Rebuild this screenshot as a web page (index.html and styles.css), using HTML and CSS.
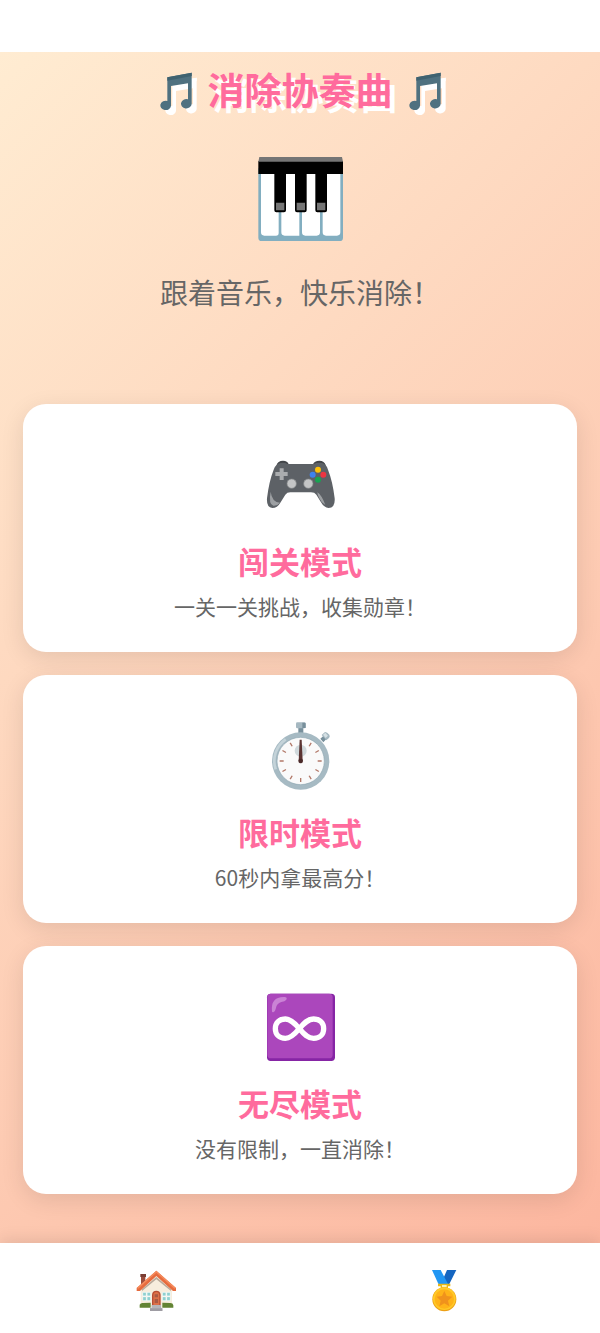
FILE: index.html
```html
<!DOCTYPE html>
<html lang="zh-CN">
<head>
<meta charset="utf-8">
<meta name="viewport" content="width=device-width, initial-scale=1">
<title>消除协奏曲</title>
<link rel="stylesheet" href="styles.css">
</head>
<body>
<div class="status-bar"></div>
<main class="home">
  <header class="hero">
    <div class="hero-title">
      <svg class="note" viewBox="0 0 120 126" aria-hidden="true"><path fill="#4f7180" d="M34 28 107 14V108A16 14 0 1 1 96 94V46L45 54V114A16 14 0 1 1 34 99Z"/><path fill="#3f6270" d="M34 28 107 14V24L34 38Z"/></svg>
      <h1>消除协奏曲</h1>
      <svg class="note" viewBox="0 0 120 126" aria-hidden="true"><path fill="#4f7180" d="M34 28 107 14V108A16 14 0 1 1 96 94V46L45 54V114A16 14 0 1 1 34 99Z"/><path fill="#3f6270" d="M34 28 107 14V24L34 38Z"/></svg>
    </div>
    <svg class="piano" viewBox="36 33 258 258" aria-hidden="true">
      <path fill="#82aec0" d="M40 70H294V278Q294 288 284 288H50Q40 288 40 278Z"/>
      <path fill="#fff" d="M48 80H101V264Q101 272 93 272H58Q48 272 48 262ZM109 80H163V272H119Q109 272 109 262ZM171 80H225V262Q225 272 215 272H181Q171 272 171 262ZM233 80H286V262Q286 272 276 272H243Q233 272 233 262Z"/>
      <path fill="#000" d="M40 48H294V87H246V196Q246 202 240 202H217Q211 202 211 196V87H185V196Q185 202 179 202H156Q150 202 150 196V87H123V196Q123 202 117 202H94Q88 202 88 196V87H40Z"/>
      <path fill="#757575" d="M43 36H291L294 50H40Z"/>
      <path fill="#757575" d="M93 173H118V196H93ZM155 173H180V196H155ZM216 173H241V196H216Z"/>
    </svg>
    <p class="tagline">跟着音乐，快乐消除！</p>
  </header>

  <div class="modes">
    <button class="mode" type="button">
      <svg class="mode-icon" viewBox="30 15 210 210" aria-hidden="true">
        <path fill="#424549" d="M64 62Q68 47 84 47Q98 47 101 58L96 68ZM174 58Q178 47 193 47Q208 47 213 62L180 68Z"/>
        <path fill="#5d6166" d="M76 54Q88 51 98 57H176Q188 51 201 54Q214 57 219 74Q233 109 239 160Q241 188 221 189Q207 188 198 172L184 149Q179 142 168 142H106Q96 142 91 149L76 173Q67 189 52 189Q34 188 36 160Q42 109 56 74Q62 57 76 54Z"/>
        <path fill="#9da0a3" d="M47 140Q51 172 75 173Q67 183 55 182Q40 178 47 140ZM187 142Q200 150 211 180Q199 174 193 160Q187 150 187 142Z"/>
        <path fill="#aaacae" d="M74 70H86V81H98V93H86V105H74V93H61V81H74Z"/>
        <g fill="#c4c5c6" stroke="#85888a" stroke-width="2"><circle cx="110" cy="116" r="14"/><circle cx="160" cy="116" r="14"/></g>
        <circle cx="189" cy="74" r="9" fill="#ffc107"/><circle cx="173" cy="89" r="9" fill="#3d82ef"/><circle cx="205" cy="89" r="9" fill="#ed3541"/><circle cx="189" cy="104" r="9" fill="#18a452"/>
      </svg>
      <span class="mode-name">闯关模式</span>
      <span class="mode-text">一关一关挑战，收集勋章！</span>
    </button>

    <button class="mode" type="button">
      <svg class="mode-icon" viewBox="30 33 210 210" aria-hidden="true">
        <path fill="#78909c" d="M130 53H145V72H130ZM196 86 208 75 217 84 205 97Z"/>
        <rect x="123" y="37" width="29" height="18" rx="4" fill="#a5b8c1"/><path fill="#78909c" d="M142 38H149Q152 38 152 42V54H142Z"/>
        <path fill="#a5b8c1" d="M200 75 210 66Q215 65 223 74Q226 79 222 84L214 91Z"/><path fill="#d5e0e4" d="M204 74 211 68 219 77 212 84Z"/>
        <circle cx="137" cy="153" r="86" fill="#a6bac3"/>
        <path fill="none" stroke="#c4d3d9" stroke-width="8" d="M62 178A79 79 0 0 1 92 88"/>
        <circle cx="137" cy="153" r="71" fill="#fafafa" stroke="#8fa7b2" stroke-width="2"/>
        <circle cx="137" cy="122" r="18" fill="#d0d9dc"/>
        <g stroke="#b27868" stroke-width="4">
          <path d="M137 204V216M188 153H200M74 153H86"/>
          <path d="M137 204V216" transform="rotate(30 137 153)"/><path d="M137 204V216" transform="rotate(60 137 153)"/><path d="M137 204V216" transform="rotate(120 137 153)"/><path d="M137 204V216" transform="rotate(150 137 153)"/><path d="M137 204V216" transform="rotate(210 137 153)"/><path d="M137 204V216" transform="rotate(240 137 153)"/><path d="M137 204V216" transform="rotate(300 137 153)"/><path d="M137 204V216" transform="rotate(330 137 153)"/>
        </g>
        <path fill="#5b3432" d="M134 89H140L143 153H131Z"/><circle cx="137" cy="153" r="7" fill="#4a2928"/>
      </svg>
      <span class="mode-name">限时模式</span>
      <span class="mode-text">60秒内拿最高分！</span>
    </button>

    <button class="mode" type="button">
      <svg class="mode-icon" viewBox="30 37 210 210" aria-hidden="true">
        <rect x="36" y="42" width="204" height="202" rx="11" fill="#8625a5"/>
        <rect x="37" y="42" width="196" height="194" rx="11" fill="#ab47bc"/>
        <path fill="#ca83d5" d="M51 96Q46 51 88 52Q98 52 94 60Q90 66 79 67Q64 71 62 88Q59 102 51 96Z"/>
        <path fill="none" stroke="#fff" stroke-width="16" stroke-linejoin="round" d="M133 147C119 130 107 118 91 118C73 118 61 130 61 147S73 176 91 176C107 176 119 164 133 147S159 118 176 118C194 118 206 130 206 147S194 176 176 176C159 176 147 164 133 147Z"/>
      </svg>
      <span class="mode-name">无尽模式</span>
      <span class="mode-text">没有限制，一直消除！</span>
    </button>
  </div>
</main>

<nav class="tabs">
  <a class="tab" href="#home" aria-label="首页">
    <svg class="tab-icon" viewBox="45 45 126 126" aria-hidden="true">
      <path fill="#9c4d3d" d="M63 63H76V92H63Z"/><path fill="#7b3e34" d="M61 57H78V66H61Z"/>
      <path fill="#f7eddd" d="M62 102 109 60 156 102V157H62Z"/>
      <path fill="#b9a99a" d="M66 103 109 66 153 103V108L109 73 66 108Z"/>
      <path fill="#e66b3e" d="M109 47 168 99V108H159L109 63 60 108H50V99Z"/>
      <path fill="#f58b5c" d="M109 47 168 99 163 101 109 53 55 101 50 99Z"/>
      <g fill="#8fd0cf" stroke="#fff" stroke-width="2"><path d="M68 112H79V123H68ZM81 112H92V123H81ZM68 125H79V137H68ZM81 125H92V137H81ZM127 112H138V123H127ZM140 112H151V123H140ZM127 125H138V137H127ZM140 125H151V137H140Z"/></g>
      <path fill="#b84d34" d="M96 150V119Q97 107 109 107T122 119V150Z"/><path fill="#dc7048" d="M100 150V120Q101 111 109 111T118 120V150Z"/><path fill="#a85a44" d="M104 118H114V127H104ZM104 132H114V144H104Z"/>
      <path fill="#638434" d="M59 158V149Q62 143 69 144L92 143V158ZM127 158V143L151 144Q159 144 160 151V158Z"/>
      <path fill="#b6b5b9" d="M95 150H123V158H127V168H90V158H95Z"/><path fill="#9e9ca3" d="M90 160H127V168H90Z"/>
    </svg>
  </a>
  <a class="tab" href="#medals" aria-label="勋章">
    <svg class="tab-icon" viewBox="39 45 126 126" aria-hidden="true">
      <path fill="#1565c0" d="M111 45H139L116 91H91Z"/>
      <path fill="#2196f3" d="M66 45H92L116 91H87Z"/>
      <path fill="#e7b818" d="M84 86H121V94H114V102H92V94H84Z"/><path fill="#fff0a4" d="M96 90H110V97H96Z"/>
      <circle cx="103" cy="133" r="36" fill="#eda016"/><circle cx="103" cy="131" r="34" fill="#ffca28"/><circle cx="103" cy="132" r="29" fill="#ffb319"/>
      <path fill="#f0921c" d="M103 108 110 123 127 125 114 137 118 154 103 145 88 154 92 137 80 125 96 123Z"/>
    </svg>
  </a>
</nav>
</body>
</html>
```
FILE: styles.css
```css
* {
  box-sizing: border-box;
}

body {
  margin: 0;
  min-height: 100vh;
  display: flex;
  flex-direction: column;
  background: #fff;
  font-family: "Noto Sans CJK SC", sans-serif;
  color: #666;
}

.status-bar {
  height: 52px;
}

.home {
  flex: 1;
  padding: 10px 23px 48px;
  background: linear-gradient(135deg, #ffecd2 0%, #fcb69f 100%);
}

.hero {
  display: flex;
  flex-direction: column;
  align-items: center;
  margin-bottom: 92px;
}

.hero-title {
  display: flex;
  align-items: center;
  justify-content: center;
  gap: 12px;
  margin-bottom: 40px;
}

h1 {
  margin: 0;
  font-size: 37px;
  line-height: 54px;
  font-weight: 700;
  color: #ff6b9d;
  text-shadow: 5px 5px 0 #fff;
}

.note {
  width: 40px;
  height: 42px;
  overflow: visible;
  filter: drop-shadow(5px 5px 0 #fff);
}

.piano {
  width: 86px;
  height: 86px;
}

.tagline {
  margin: 30px 0 0;
  font-size: 28px;
  line-height: 40px;
}

.modes {
  display: flex;
  flex-direction: column;
  gap: 23px;
}

.mode {
  display: flex;
  flex-direction: column;
  align-items: center;
  width: 100%;
  padding: 46px 23px 30px;
  border: 0;
  border-radius: 23px;
  background: #fff;
  box-shadow: 0 6px 23px rgba(0, 0, 0, 0.1);
  font-family: inherit;
  color: inherit;
  cursor: pointer;
}

.mode-icon {
  width: 70px;
  height: 70px;
  margin-bottom: 18px;
}

.mode-name {
  margin-bottom: 6px;
  font-size: 31px;
  line-height: 46px;
  font-weight: 700;
  color: #ff6b9d;
}

.mode-text {
  font-size: 21px;
  line-height: 32px;
}

.tabs {
  position: sticky;
  bottom: 0;
  display: flex;
  padding: 27px 12px 21px;
  background: #fff;
  box-shadow: 0 -3px 15px rgba(0, 0, 0, 0.1);
}

.tab {
  flex: 1;
  display: flex;
  justify-content: center;
}

.tab-icon {
  width: 42px;
  height: 42px;
}
```
